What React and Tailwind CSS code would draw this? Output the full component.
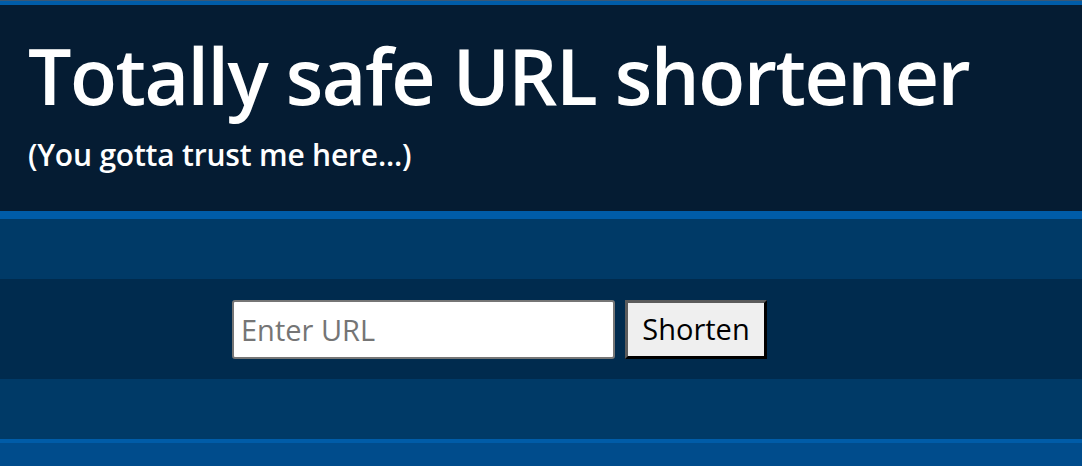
import React, { useState } from 'react';

const App = () => {
  const [url, setUrl] = useState('');

  return (
    <div className="min-h-[466px] w-full bg-[#004c8c] font-['Open_Sans',sans-serif]">
      <div className="h-px bg-[#3b5875]"></div>
      <div className="h-1 bg-[#005ca8]"></div>

      <header className="h-[206px] bg-[#051c33] pl-7 pt-[25px] text-white">
        <h1 className="text-[77px] font-semibold leading-[92px] tracking-[-1.5px]">Totally safe URL shortener</h1>
        <p className="mt-[16px] text-[30px] font-semibold leading-[34px] tracking-[-0.2px]">(You gotta trust me here...)</p>
      </header>

      <div className="h-2 bg-[#005ca8]"></div>
      <div className="h-[60px] bg-[#003a67]"></div>

      <form
        className="flex h-[100px] items-center gap-[10px] bg-[#002b4e] pl-[232px]"
        onSubmit={(e) => e.preventDefault()}
      >
        <input
          type="text"
          value={url}
          onChange={(e) => setUrl(e.target.value)}
          placeholder="Enter URL"
          className="h-[59px] w-[383px] rounded-[3px] border-2 border-[#767676] bg-white pl-[7px] pr-2 text-[29px] text-black outline-none placeholder:text-[#757575]"
        />
        <button
          type="submit"
          className="h-[59px] w-[142px] border-[3px] border-t-[#5b5b5b] border-l-[#5b5b5b] border-b-black border-r-black bg-[#efefef] text-[29px] text-black"
        >
          Shorten
        </button>
      </form>

      <div className="h-[60px] bg-[#003a67]"></div>
      <div className="h-1 bg-[#005ca8]"></div>
    </div>
  );
};

export default App;
